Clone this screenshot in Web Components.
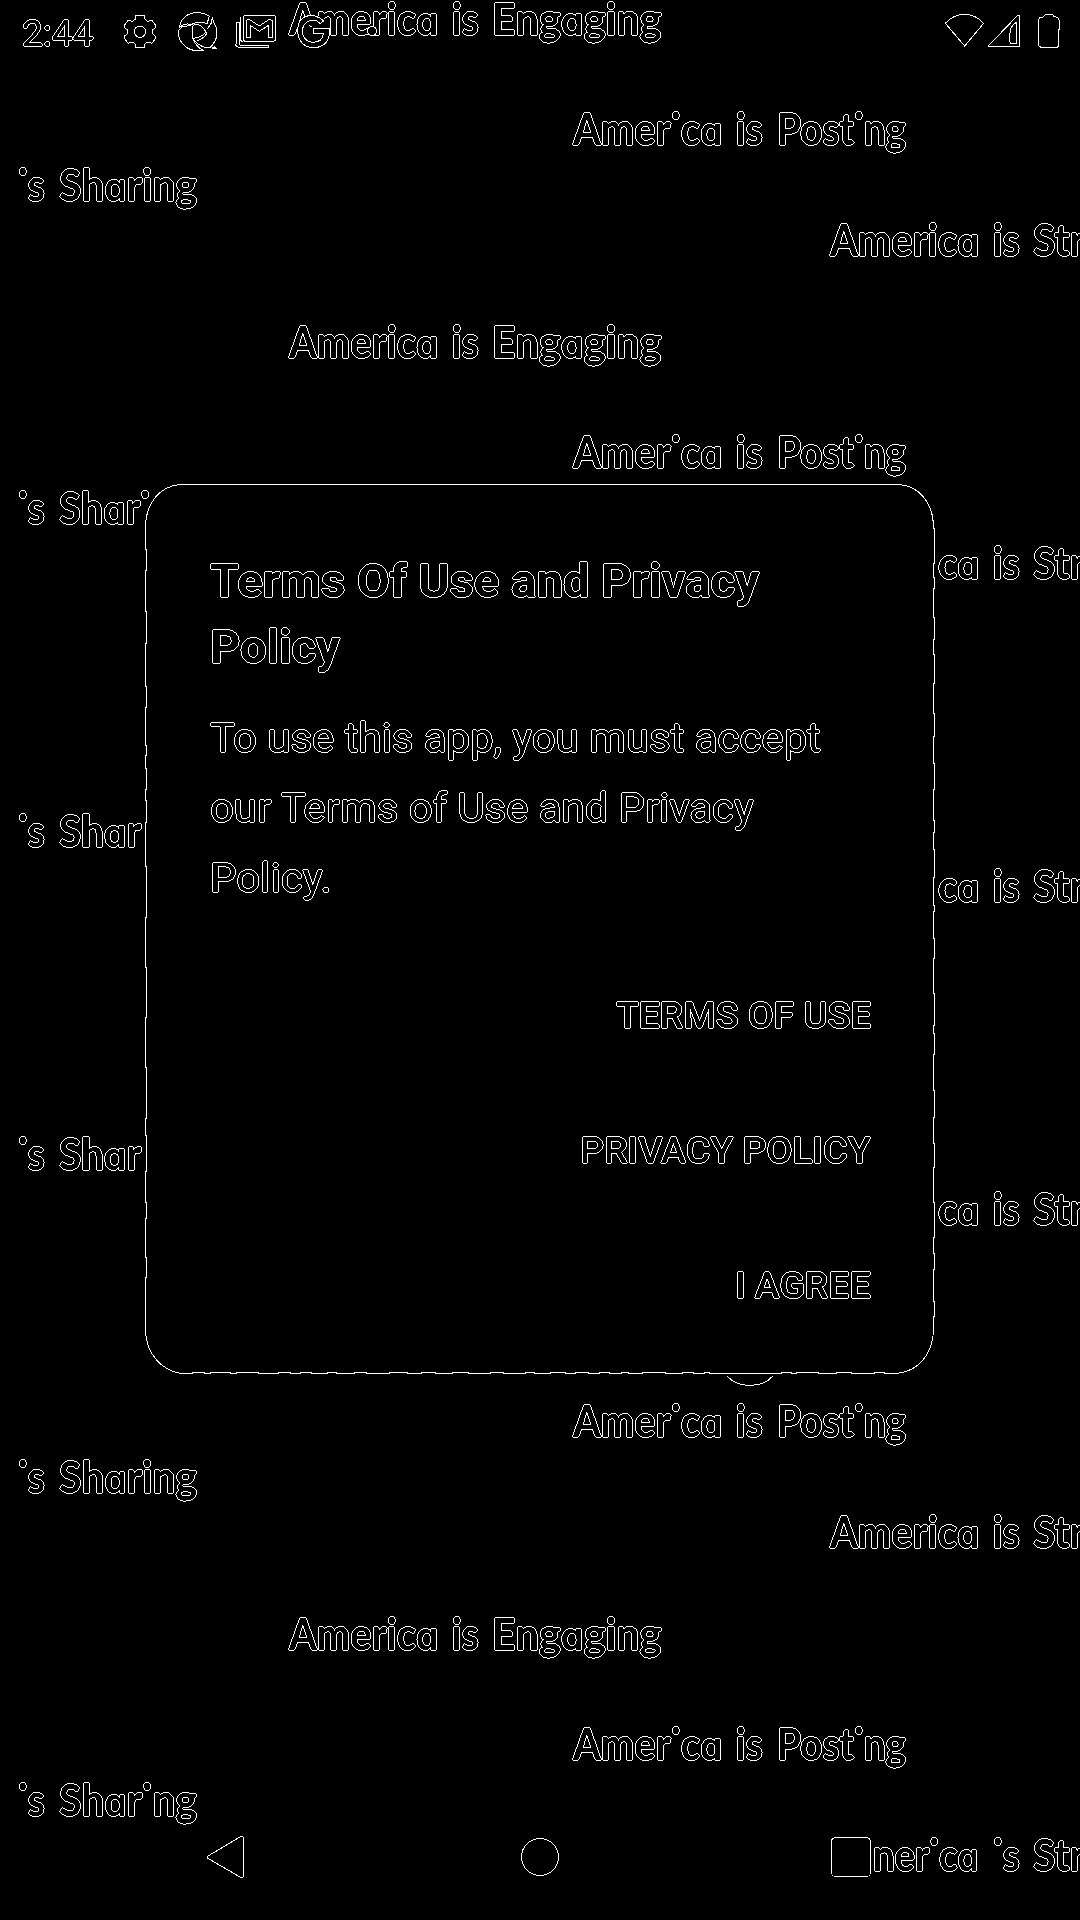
<!DOCTYPE html>
<html lang="en"><head><meta charset="utf-8"><title>Terms Of Use and Privacy Policy</title>
<style>html,body{margin:0;background:#000;color:#fff}body{width:1080px;height:1920px;overflow:hidden}</style></head><body>
<app-screen></app-screen>
<script>
// Turns solid lettering into a crisp one pixel contour.
const CONTOUR=`<svg width="0" height="0" style="position:absolute" aria-hidden="true"><filter id="contour" x="-5" y="-5" width="1090" height="1940" filterUnits="userSpaceOnUse" color-interpolation-filters="sRGB"><feComponentTransfer in="SourceGraphic" result="solid"><feFuncA type="discrete" tableValues="0 1"/></feComponentTransfer><feConvolveMatrix in="solid" order="3" kernelMatrix="0 1 0 1 0 1 0 1 0" divisor="1" preserveAlpha="false" result="grown"/><feComposite in="grown" in2="solid" operator="out" result="edge"/><feFlood flood-color="#fff"/><feComposite in2="edge" operator="in"/></filter></svg>`;
function define(name,render,after){customElements.define(name,class extends HTMLElement{
 constructor(){super();this.attachShadow({mode:'open'})}
 connectedCallback(){this.shadowRoot.innerHTML=render(this);if(after)after(this)}})}

// A run of text stretched to an exact width; "*i" draws an i without its stem.
define('fit-text',el=>{
 const sign=el.hasAttribute('sign');
 let t=el.getAttribute('text').replace(/\*i/g,'\u0001');
 if(sign)t=t.replace(/a/g,'<b>a</b>');
 t=t.replace(/\u0001/g,'<i>i</i>');
 return `<style>:host{display:block;white-space:pre;flex:none;width:${el.getAttribute('w')}px}
 span{display:inline-block;transform-origin:0 50%}
 b{font:600 38px/1 Inter,sans-serif;font-feature-settings:"cv11" 1}
 i{font-style:normal;display:inline-block;line-height:50px;clip-path:inset(0 0 33px 0)}</style><span>${t}</span>`},
 el=>{const s=el.shadowRoot.querySelector('span');const w=+el.getAttribute('w');
 s.style.transform=`scaleX(${w/s.offsetWidth})`});

define('sign-row',el=>{
 const words=el.getAttribute('words').split('|').map(w=>{const[t,n,g]=w.split(':');return `<fit-text sign text="${t}" w="${n}" style="margin-right:${g||0}px"></fit-text>`}).join('');
 return `<style>:host{display:flex;flex:none;height:${el.getAttribute('h')}px;padding-left:${el.getAttribute('x')}px;line-height:50px;font:700 43px/50px Lato,sans-serif}</style>${words}`});

define('sign-wall',()=>{
 const A='America:149:14|is:27:13|',P='Amer*ica:149:14|is:27:14|Post*ing:129';
 const E=`<sign-row h="110" x="289" words="${A}Engaging:170"></sign-row>`;
 const pr=`<sign-row h="56" x="573" words="${P}"></sign-row>`;
 const S=t=>`<sign-row h="55" x="18" words="*is:27:14|${t}"></sign-row>`;
 const R=`<sign-row h="102" x="830" words="${A}Str:52"></sign-row>`;
 const C=`<sign-row h="102" x="938" words="ca:41:14|is:27:13|Str:52"></sign-row>`;
 const e=`<div style="height:110px;flex:none"></div>`,p=`<div style="height:56px;flex:none"></div>`;
 return `<style>:host{display:block;width:1080px;height:1920px;overflow:hidden}
 .wall{display:flex;flex-direction:column;height:1926px;margin-top:-6px;filter:url(#contour)}</style>${CONTOUR}<div class="wall">
 ${E}${pr}${S('Sharing:138')}${R}
 ${E}${pr}${S('Shar*i:91')}${C}
 ${e}${p}${S('Shar:82')}${C}
 ${e}${p}${S('Shar:82')}${C}
 ${e}${pr}${S('Sharing:138')}${R}
 ${E}${pr}${S('Shar*ing:138')}
 <sign-row h="60" x="873" words="ner*ica:106:14|*is:27:13|Str:52"></sign-row></div>`});

define('line-icon',el=>`<style>:host{display:block;flex:none}svg{display:block;overflow:visible;fill:none;stroke:#fff;stroke-width:${el.getAttribute('sw')||3};shape-rendering:crispEdges}</style><svg width="${el.getAttribute('w')}" height="${el.getAttribute('h')}" viewBox="${el.getAttribute('box')}">${ICONS[el.getAttribute('name')]}</svg>`);

const ICONS={
 gear:`<path d="M406 58L408 46H432L435 58L443 64L455 60L467 76V82L458 90V101L467 109V115L456 130L443 126L435 131L432 143H408L405 131L397 126L385 130L373 115V109L382 101V90L373 82V76L385 60L397 64Z"/><circle cx="420" cy="95" r="17"/>`,
 aperture:`<path d="M538 80C545 54 564 38 592 38C608 38 618 41 628 49L621 71C605 65 583 67 573 74C560 69 548 74 538 83ZM621 88L633 71L637 52L641 68C650 79 651 91 651 103C649 120 640 134 628 144C610 143 594 134 583 122M590 124C611 115 620 108 620 96M536 91L548 79L573 77M576 111C584 131 594 145 611 151C584 155 561 149 547 130C538 119 534 103 536 91M583 74C598 72 611 82 618 96C609 109 595 113 579 115L578 79ZM637 144L643 140L648 145Z"/>`,
 mail:`<rect x="729" y="46" width="98" height="78" rx="9"/><path d="M739 113V61L748 58L778 78L808 58L817 61V113H804V77L778 94L752 77V113ZM709 67H717V132L722 136H806V143H718L708 137ZM720 52L720 119L728 126"/>`,
 g:`<circle cx="942" cy="94" r="48" fill="#000" stroke="none"/><path fill="#000" d="M970 63C956 47 933 42 914 51C894 61 889 86 895 109C904 136 927 147 952 142C979 137 991 115 988 86H940V100H971C968 118 955 127 939 127C918 126 907 109 907 92C909 70 926 58 944 61C952 62 955 66 961 71Z"/><path d="M928 76L934 81"/>`,
 dot:`<circle cx="1116" cy="93" r="14" fill="#000"/>`,
 wifi:`<path fill="#000" d="M136 70C168 34 219 34 251 70L194 138Z"/>`,
 cell:`<path fill="#000" d="M265 138L353 46H359V139H265ZM349 68V131H333L329 124V105L333 83L344 70Z"/>`,
 battery:`<path fill="#000" d="M416 60L419 52L430 51L437 43H457L462 50L473 52L478 61V87L475 91V139L471 142H423L417 138Z"/>`,
 back:`<path fill="#000" d="M1 20L33 1Q36.500 -1 36.500 3V39Q36.500 43 33 41L2 23Q-1 21.500 1 20Z"/>`,
 home:`<circle cx="19" cy="19" r="18.500" fill="#000"/>`,
 recent:`<rect x=".5" y=".5" width="39" height="39" rx="4" fill="#000"/>`,
 arc:`<path d="M500 78C535 117 605 117 640 78"/>`
};
define('status-bar',()=>`<style>:host{display:flex;width:1080px;height:66px;align-items:flex-start}
 .time{filter:url(#contour);font:400 36px/42px Roboto,sans-serif;padding:13px 0 0 22px;width:101px}
 line-icon{margin-top:12px}</style>${CONTOUR}<div class="time"><fit-text text="2:44" w="71"></fit-text></div>
 <line-icon name="gear" w="34" h="40" box="369 36 102 120"></line-icon>
 <line-icon name="aperture" w="41" h="40" box="531 36 123 120" style="margin-left:20px"></line-icon>
 <line-icon name="mail" w="42" h="40" box="705 36 126 120" style="margin-left:17px"></line-icon>
 <line-icon name="g" w="36" h="40" box="888 36 108 120" style="margin-left:19px"></line-icon>
 <line-icon name="dot" w="12" h="40" box="1098 36 36 120" style="margin-left:34px"></line-icon>
 <div style="flex:1"></div>
 <line-icon name="wifi" w="40" h="40" box="135 36 120 120"></line-icon>
 <line-icon name="cell" w="34" h="40" box="261 36 102 120" style="margin-left:2px"></line-icon>
 <line-icon name="battery" w="23" h="40" box="414 36 69 120" style="margin:12px 19px 0 17px"></line-icon>`);

define('nav-bar',()=>`<style>:host{display:flex;width:1080px;height:84px;align-items:flex-start}</style>
 <line-icon sw="1" name="back" w="38" h="42" box="0 0 38 42" style="margin:0 276px 0 207px"></line-icon>
 <line-icon sw="1" name="home" w="38" h="38" box="0 0 38 38" style="margin:2px 272px 0 0"></line-icon>
 <line-icon sw="1" name="recent" w="40" h="40" box="0 0 40 40" style="margin-top:1px"></line-icon>`);

// Card frame whose long edges shift by a pixel here and there.
function frame(){
 let seed=7;const r=()=>(seed=(seed*16807)%2147483647)/2147483647;
 let d='M34 .5H754C774 2 787 18 788.500 40',y,o=0;
 for(y=40;y<845;){y=Math.min(848,y+4+r()*34);d+=`V${y|0}`;if(y<840){o=1-o;d+=`H${788.5+o}`}}
 d+='H788.500C787 870 774 887 752 889.500';
 let x=752;o=0;while(x>40){x=Math.max(36,x-4-r()*20);d+=`H${x|0}`;if(x>42&&(x<575||x>630)){o=1-o;d+=`V${889.5-o}`}}
 d+='V889.500C16 886 2 870 .5 848';
 y=848;o=0;while(y>44){y=Math.max(40,y-10-r()*45);d+=`V${y|0}`;if(y>46){o=1-o;d+=`H${.5+o}`}}
 return d+'H.5C2 18 15 3 34 .5Z'}
define('terms-dialog',()=>`<style>:host{display:grid;width:790px;height:890px}
 svg.frame{grid-area:1/1;display:block;overflow:visible;shape-rendering:crispEdges;fill:#000;stroke:#fff}
 .body{grid-area:1/1;display:flex;flex-direction:column;padding:0 64px 0 65px;filter:url(#contour)}
 .title{font:700 46px/66px Roboto,sans-serif;margin-top:64px}
 .copy{font:400 40px/70px Roboto,sans-serif;margin-top:24px}
 .actions{font:500 36px/135px Roboto,sans-serif;display:flex;flex-direction:column;align-items:flex-end;margin-top:35px}</style>${CONTOUR}
 <svg class="frame" width="790" height="890"><path d="${frame()}"/></svg>
 <div class="body"><div class="title"><fit-text text="Terms Of Use and Privacy" w="549"></fit-text><fit-text text="Policy" w="130"></fit-text></div>
 <div class="copy"><fit-text text="To use this app, you must accept" w="611"></fit-text><fit-text text="our Terms of Use and Privacy" w="544"></fit-text><fit-text text="Policy." w="122"></fit-text></div>
 <div class="actions"><fit-text text="TERMS OF USE" w="255"></fit-text><fit-text text="PRIVACY POLICY" w="291"></fit-text><fit-text text="I AGREE" w="136"></fit-text></div></div>`);

define('app-screen',()=>`<style>:host{display:grid;width:1080px;height:1920px;background:#000;overflow:hidden}
 sign-wall,.front{grid-area:1/1}.front{display:flex;flex-direction:column;z-index:1}
 terms-dialog{margin:418px 0 0 145px}nav-bar{margin-top:auto}
 .arc{margin:1px 0 0 726px}</style><sign-wall></sign-wall>
 <div class="front"><status-bar></status-bar><terms-dialog></terms-dialog><line-icon class="arc" name="arc" w="48" h="12" box="498 76 144 36"></line-icon><nav-bar></nav-bar></div>`);
</script></body></html>
